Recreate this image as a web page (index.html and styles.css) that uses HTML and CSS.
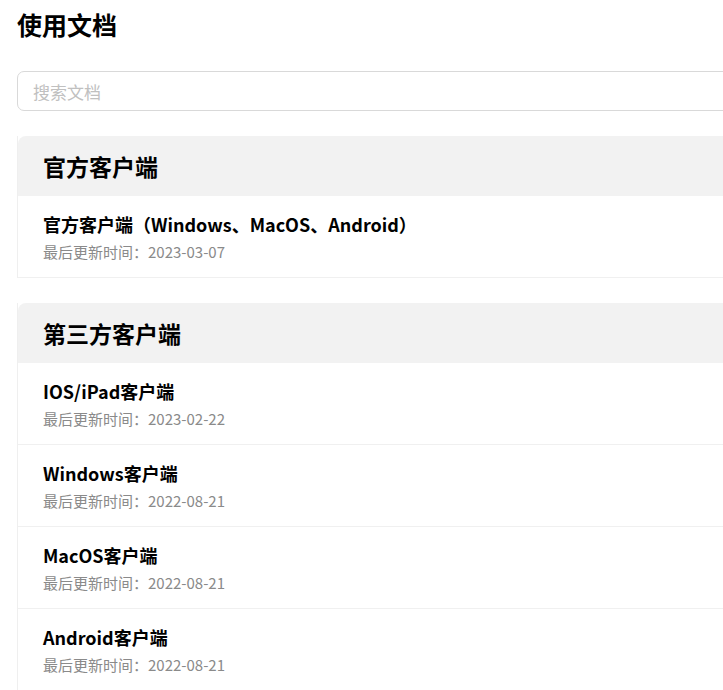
FILE: index.html
```html
<!DOCTYPE html>
<html lang="zh-CN">
<head>
<meta charset="utf-8">
<title>使用文档</title>
<link rel="stylesheet" href="styles.css">
</head>
<body>
<div class="page">
  <h1 class="page-title">使用文档</h1>
  <div class="search">
    <input class="search-input" type="text" placeholder="搜索文档">
  </div>

  <section class="group">
    <h2 class="group-title">官方客户端</h2>
    <a class="doc" href="#">
      <div class="doc-title">官方客户端（Windows、MacOS、Android）</div>
      <div class="doc-date">最后更新时间：2023-03-07</div>
    </a>
  </section>

  <section class="group">
    <h2 class="group-title">第三方客户端</h2>
    <a class="doc" href="#">
      <div class="doc-title">IOS/iPad客户端</div>
      <div class="doc-date">最后更新时间：2023-02-22</div>
    </a>
    <a class="doc" href="#">
      <div class="doc-title">Windows客户端</div>
      <div class="doc-date">最后更新时间：2022-08-21</div>
    </a>
    <a class="doc" href="#">
      <div class="doc-title">MacOS客户端</div>
      <div class="doc-date">最后更新时间：2022-08-21</div>
    </a>
    <a class="doc" href="#">
      <div class="doc-title">Android客户端</div>
      <div class="doc-date">最后更新时间：2022-08-21</div>
    </a>
  </section>
</div>
</body>
</html>
```

FILE: styles.css
```css
html, body {
  margin: 0;
  padding: 0;
  background: #ffffff;
  overflow: hidden;
}
body {
  font-family: "Noto Sans CJK SC", "Noto Sans", "Liberation Sans", sans-serif;
  color: #000;
}
.page {
  width: 800px;
  padding-left: 17px;
}
.page-title {
  margin: 6px 0 0;
  font-size: 25px;
  line-height: 36px;
  font-weight: 700;
}
.search {
  margin-top: 29px;
}
.search-input {
  box-sizing: border-box;
  display: block;
  width: 100%;
  height: 40px;
  border: 1px solid #d9d9d9;
  border-radius: 7px;
  padding: 0 15px;
  font-family: inherit;
  font-size: 17px;
  outline: none;
  background: #fff;
}
.search-input::placeholder {
  color: #c0c0c0;
}
.group {
  margin-top: 25px;
  border-left: 1px solid #efefef;
}
.group + .group {
  margin-top: 25px;
}
.group-title {
  margin: 0;
  height: 60px;
  line-height: 60px;
  padding-left: 25px;
  background: #f2f2f2;
  border-top-left-radius: 8px;
  font-size: 23px;
  font-weight: 700;
}
.doc {
  display: block;
  text-decoration: none;
  color: inherit;
  padding: 15px 25px 13px;
  border-bottom: 1px solid #f0f0f0;
}
.doc-title {
  font-size: 18px;
  line-height: 26px;
  font-weight: 700;
  color: #000;
}
.doc-date {
  margin-top: 3px;
  font-size: 15px;
  line-height: 24px;
  color: #8a8a8a;
}
```
